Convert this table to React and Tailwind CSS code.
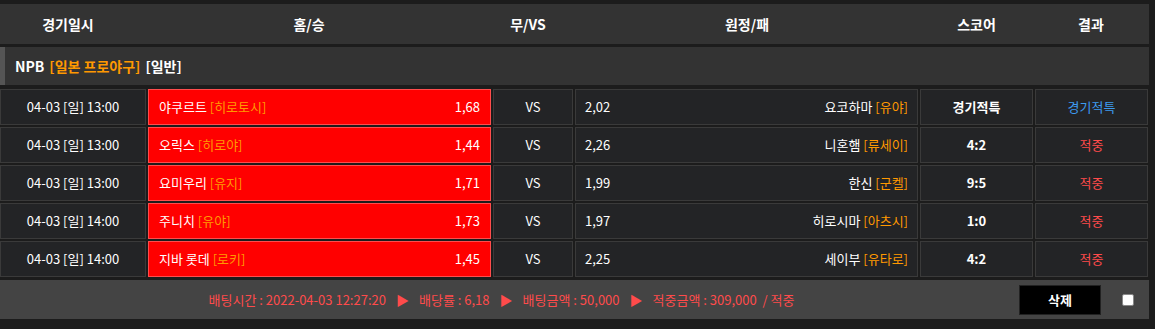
import React from "react";

const games = [
  { date: "04-03 [일] 13:00", home: "야쿠르트", homeTag: "[히로토시]", homeOdds: "1,68", awayOdds: "2,02", away: "요코하마", awayTag: "[유야]", score: "경기적특", result: "경기적특", special: true },
  { date: "04-03 [일] 13:00", home: "오릭스", homeTag: "[히로야]", homeOdds: "1,44", awayOdds: "2,26", away: "니혼햄", awayTag: "[류세이]", score: "4:2", result: "적중" },
  { date: "04-03 [일] 13:00", home: "요미우리", homeTag: "[유지]", homeOdds: "1,71", awayOdds: "1,99", away: "한신", awayTag: "[군켈]", score: "9:5", result: "적중" },
  { date: "04-03 [일] 14:00", home: "주니치", homeTag: "[유야]", homeOdds: "1,73", awayOdds: "1,97", away: "히로시마", awayTag: "[아츠시]", score: "1:0", result: "적중" },
  { date: "04-03 [일] 14:00", home: "지바 롯데", homeTag: "[로키]", homeOdds: "1,45", awayOdds: "2,25", away: "세이부", awayTag: "[유타로]", score: "4:2", result: "적중" },
];

const cell = "h-full flex items-center bg-[#232426] border border-[#3a3a3a]";

function Row({ g }) {
  return (
    <div className="flex h-[36px] gap-[2px] text-[13px] text-white">
      <div className={`${cell} w-[146px] justify-center`}>{g.date}</div>
      <div className="h-full w-[343px] flex items-center justify-between px-[10px] bg-[#ff0000] border border-[#ff4d4d]">
        <span>
          {g.home} <span className="text-[#ff9900]">{g.homeTag}</span>
        </span>
        <span>{g.homeOdds}</span>
      </div>
      <div className={`${cell} w-[80px] justify-center`}>VS</div>
      <div className={`${cell} w-[343px] justify-between px-[9px]`}>
        <span>{g.awayOdds}</span>
        <span>
          {g.away} <span className="text-[#ff9900]">{g.awayTag}</span>
        </span>
      </div>
      <div className={`${cell} w-[113px] justify-center font-bold`}>{g.score}</div>
      <div className={`${cell} w-[113px] justify-center ${g.special ? "text-[#3d9bf0]" : "text-[#ff4b4b]"}`}>
        {g.result}
      </div>
    </div>
  );
}

export default function App() {
  return (
    <div
      className="w-[1155px] h-[329px] bg-[#1c1c1c] pt-[4px] pr-[6px] overflow-hidden"
      style={{ fontFamily: '"Noto Sans CJK KR", "Noto Sans", sans-serif' }}
    >
      {/* header */}
      <div className="h-[40px] flex items-center bg-[#333333] text-white text-[14px] font-bold">
        <div className="w-[136px] text-center">경기일시</div>
        <div className="w-[346px] text-center">홈/승</div>
        <div className="w-[92px] text-center">무/VS</div>
        <div className="w-[346px] text-center">원정/패</div>
        <div className="w-[113px] text-center">스코어</div>
        <div className="flex-1 text-center">결과</div>
      </div>

      {/* league */}
      <div className="mt-[3px] h-[38px] flex items-center bg-[#333333] border-l-[5px] border-[#555555] pl-[10px] text-[14px] font-bold text-white">
        NPB <span className="ml-[5px] text-[#ff9900]">[일본 프로야구]</span>
        <span className="ml-[5px]">[일반]</span>
      </div>

      <div className="mt-[4px] flex flex-col gap-[2px]">
        {games.map((g, i) => (
          <Row key={i} g={g} />
        ))}
      </div>

      {/* footer */}
      <div className="mt-[3px] h-[39px] flex items-center bg-[#444444] text-[13px] text-[#ff4b4b]">
        <div className="w-[1003px] flex justify-center gap-[10px]">
          <span>배팅시간 : 2022-04-03 12:27:20</span>
          <span>▶</span>
          <span>배당률 : 6,18</span>
          <span>▶</span>
          <span>배팅금액 : 50,000</span>
          <span>▶</span>
          <span>적중금액 : 309,000 &nbsp;/ 적중</span>
        </div>
        <button className="ml-[16px] w-[82px] h-[30px] bg-black border border-[#222] text-white text-[13px] font-bold">
          삭제
        </button>
        <div className="ml-[21px] w-[12px] h-[12px] bg-white border border-[#888] rounded-[2px]" />
      </div>
    </div>
  );
}
